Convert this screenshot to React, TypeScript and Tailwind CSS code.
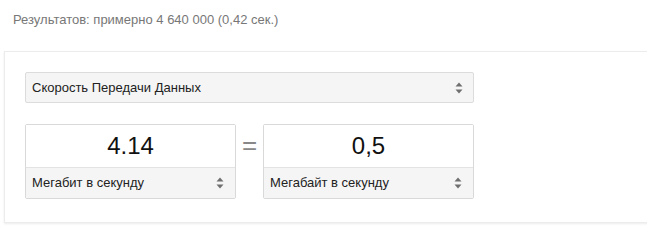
import React from "react";

function Arrows() {
  return (
    <svg width="8" height="12" viewBox="0 0 8 12" className="shrink-0">
      <path d="M4 0.5 L7.5 4.5 L0.5 4.5 Z" fill="#6f6f6f" />
      <path d="M4 11.5 L7.5 7.5 L0.5 7.5 Z" fill="#6f6f6f" />
    </svg>
  );
}

function UnitBox({ value, unit }: { value: string; unit: string }) {
  return (
    <div className="w-[211px] border border-[#d9d9d9] rounded-[2px] flex flex-col">
      <div className="h-[42px] flex items-center justify-center bg-white text-[24px] text-[#111] leading-none">
        {value}
      </div>
      <div className="h-[31px] border-t border-[#e3e3e3] bg-[#f5f5f5] flex items-center justify-between pl-[6px] pr-[11px] text-[13px] text-[#222]">
        <span>{unit}</span>
        <Arrows />
      </div>
    </div>
  );
}

export default function App() {
  return (
    <div className="w-[647px] h-[228px] bg-white overflow-hidden" style={{ fontFamily: '"Liberation Sans", Arial, sans-serif' }}>
      <div className="pl-[13px] pt-[12px] h-[51px] text-[13px] leading-[16px] text-[#777]">
        Результатов: примерно 4 640 000 (0,42 сек.)
      </div>
      <div className="ml-[4px] w-[650px] h-[172px] border border-[#ececec] shadow-[0_1px_2px_rgba(0,0,0,0.08)] pl-[20px] pt-[20px]">
        <div className="w-[449px] h-[31px] border border-[#dcdcdc] rounded-[2px] bg-[#f5f5f5] flex items-center justify-between pl-[6px] pr-[10px] text-[13px] text-[#222]">
          <span>Скорость Передачи Данных</span>
          <Arrows />
        </div>
        <div className="mt-[21px] flex items-start">
          <UnitBox value="4.14" unit="Мегабит в секунду" />
          <div className="w-[27px] h-[42px] flex items-center justify-center text-[26px] text-[#888] leading-none">=</div>
          <UnitBox value="0,5" unit="Мегабайт в секунду" />
        </div>
      </div>
    </div>
  );
}
